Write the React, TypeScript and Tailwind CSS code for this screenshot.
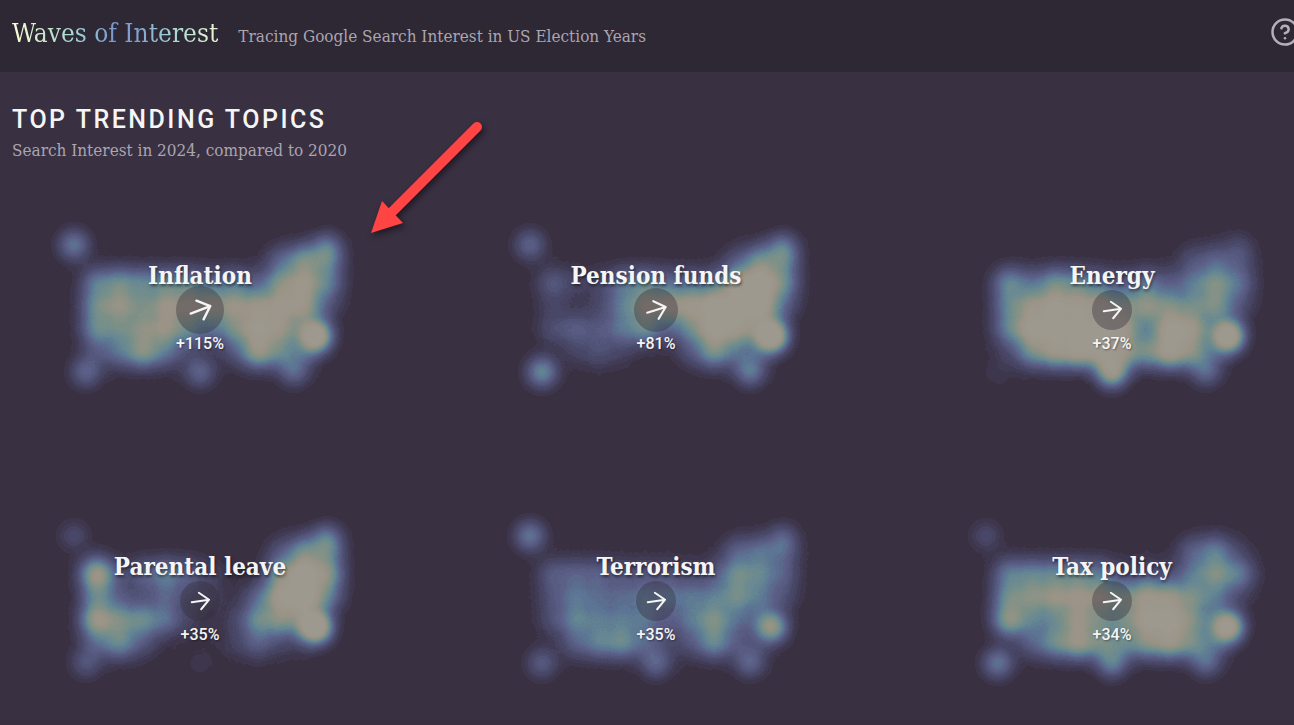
import React from 'react';
import { HelpCircle } from 'lucide-react';

interface Topic {
  name: string;
  change: number;
  angle: number;
  arrowSize: number;
  // interest over the mainland, in tenths, one row per latitude band
  mainland: number[][];
  // Alaska, Hawaii, Texas, Florida, Maine, DC
  outliers: number[];
}

const TOPICS: Topic[] = [
  {
    name: 'Inflation',
    change: 115,
    angle: -21,
    arrowSize: 48,
    mainland: [
      [0, 0, 0, 0, 0, 0, 0, 0, 3, 7, 5],
      [5, 6, 5, 5, 5, 3, 4, 2, 7, 9, 5],
      [6, 8, 5, 8, 8, 8, 8, 8, 9, 9, 2],
      [6, 5, 7, 8, 5, 3, 6, 10, 8, 3, 0],
      [2, 4, 8, 4, 1, 0, 2, 9, 5, 3, 0],
    ],
    outliers: [4, 3, 3, 3, 3, 11],
  },
  {
    name: 'Pension funds',
    change: 81,
    angle: -17,
    arrowSize: 44,
    mainland: [
      [0, 0, 0, 0, 0, 0, 0, 0, 2, 6, 5],
      [3, 1, 1, 4, 5, 3, 3, 3, 9, 13, 6],
      [1, 0, 1, 4, 8, 9, 9, 11, 12, 12, 3],
      [2, 3, 2, 4, 6, 2, 5, 11, 9, 5, 0],
      [0, 1, 2, 1, 0, 0, 2, 7, 3, 2, 0],
    ],
    outliers: [3, 5, 0, 4, 3, 12],
  },
  {
    name: 'Energy',
    change: 37,
    angle: -8,
    arrowSize: 40,
    mainland: [
      [0, 0, 0, 0, 0, 0, 0, 0, 2, 3, 2],
      [6, 3, 6, 5, 3, 2, 4, 2, 4, 7, 4],
      [5, 8, 10, 9, 9, 6, 8, 6, 5, 7, 2],
      [5, 11, 10, 10, 10, 9, 2, 11, 9, 1, 0],
      [1, 6, 9, 10, 10, 8, 6, 11, 7, 2, 0],
    ],
    outliers: [0, 0.5, 8, 3, 1, 12],
  },
  {
    name: 'Parental leave',
    change: 35,
    angle: -8,
    arrowSize: 40,
    mainland: [
      [0, 0, 0, 0, 0, 0, 0, 0, 2, 6, 5],
      [11, 1, 3, 5, 3, 1, 0, 0, 7, 12, 8],
      [5, 2, 1, 3, 1, 1, 0, 3, 10, 13, 5],
      [10, 6, 6, 4, 1, 0, 1, 6, 7, 5, 0],
      [3, 6, 2, 0, 0, 0, 1, 3, 1, 1, 0],
    ],
    outliers: [1.5, 2, 0.5, 0, 3, 12],
  },
  {
    name: 'Terrorism',
    change: 35,
    angle: -8,
    arrowSize: 40,
    mainland: [
      [0, 0, 0, 0, 0, 0, 0, 0, 3, 4, 3],
      [3, 3, 3, 2, 2, 2, 1, 2, 6, 5, 3],
      [2, 4, 3, 3, 4, 4, 4, 4, 6, 4, 2],
      [2, 5, 4, 4, 4, 2, 4, 7, 3, 2, 0],
      [0, 3, 5, 6, 3, 1, 2, 6, 2, 1, 0],
    ],
    outliers: [4, 2.5, 3, 3, 2, 7],
  },
  {
    name: 'Tax policy',
    change: 34,
    angle: -8,
    arrowSize: 40,
    mainland: [
      [0, 0, 0, 0, 0, 0, 0, 0, 3, 5, 1],
      [5, 5, 5, 5, 4, 1, 2, 1, 4, 7, 5],
      [6, 7, 8, 8, 8, 6, 9, 8, 6, 4, 1],
      [9, 4, 4, 8, 5, 5, 10, 11, 6, 2, 0],
      [0, 3, 6, 9, 6, 5, 7, 9, 6, 3, 0],
    ],
    outliers: [1.5, 4, 4, 3, 0, 10],
  },
];

const OUTLIER_SPOTS = [
  [44, 35],
  [56, 162],
  [170, 162],
  [264, 161],
  [297, 37],
  [286, 126],
];

// Density colours, from no interest to the strongest
const SCALE = [
  [57, 48, 66],
  [70, 66, 96],
  [80, 82, 118],
  [92, 96, 137],
  [92, 117, 148],
  [100, 135, 147],
  [118, 143, 138],
  [138, 146, 134],
  [155, 147, 134],
  [156, 150, 140],
  [157, 153, 143],
];

const BANDS = 60;

// The upper half of the range is clipped to the last colour
const bandTable = (channel: number) =>
  Array.from({ length: BANDS }, (_, i) => {
    const pos = Math.min((i / (BANDS / 2)) * 10, 10);
    const low = Math.floor(pos);
    const high = Math.min(low + 1, 10);
    const value = SCALE[low][channel] + (SCALE[high][channel] - SCALE[low][channel]) * (pos - low);
    return ((value + 0.2) / 255).toFixed(5);
  }).join(' ');

const GAUSS_STOPS = Array.from({ length: 13 }, (_, i) => {
  const t = i / 12;
  return { offset: t, opacity: i === 12 ? 0 : Math.exp(-4.5 * t * t) };
});

const SharedDefs = () => (
  <svg className="absolute h-0 w-0" aria-hidden="true">
    <defs>
      <radialGradient id="kernel">
        {GAUSS_STOPS.map((s) => (
          <stop key={s.offset} offset={s.offset} stopColor="#fff" stopOpacity={s.opacity} />
        ))}
      </radialGradient>
      <filter id="density" x="0" y="0" width="1" height="1" colorInterpolationFilters="sRGB">
        <feComponentTransfer>
          <feFuncR type="discrete" tableValues={bandTable(0)} />
          <feFuncG type="discrete" tableValues={bandTable(1)} />
          <feFuncB type="discrete" tableValues={bandTable(2)} />
        </feComponentTransfer>
      </filter>
    </defs>
  </svg>
);

const HeatMap = ({ topic }: { topic: Topic }) => {
  // mainland points overlap, so they are wider and weaker than the outliers
  const points = [
    ...topic.mainland.flatMap((row, r) =>
      row.map((w, c) => ({ x: 67 + c * 23, y: 50 + r * 23, w: w * 0.7, radius: 34 }))
    ),
    ...topic.outliers.map((w, i) => ({ x: OUTLIER_SPOTS[i][0], y: OUTLIER_SPOTS[i][1], w, radius: 31 })),
  ].filter((p) => p.w > 0);

  return (
    <svg viewBox="0 0 340 200" className="col-start-1 row-start-1 h-[200px] w-[340px]" aria-hidden="true">
      <g filter="url(#density)">
        <rect width="340" height="200" fill="#000" />
        {points.map((p) => (
          <circle
            key={`${p.x}-${p.y}`}
            cx={p.x}
            cy={p.y}
            r={p.radius}
            fill="url(#kernel)"
            opacity={Math.min(p.w / 20, 1)}
            className="mix-blend-plus-lighter"
          />
        ))}
      </g>
    </svg>
  );
};

const TrendArrow = ({ angle, size }: { angle: number; size: number }) => (
  <svg width={size} height={size} viewBox="-24 -24 48 48" className="shrink-0" aria-hidden="true">
    <circle r="24" fill="#36303c" fillOpacity="0.4" />
    <path
      d="M-10 0H11M0-10L11 0L0 10"
      transform={`rotate(${angle})`}
      fill="none"
      stroke="#f5f5f5"
      strokeWidth="2.4"
      strokeLinecap="round"
      strokeLinejoin="round"
    />
  </svg>
);

const TopicCard = ({ topic }: { topic: Topic }) => (
  <button type="button" className="grid cursor-pointer justify-items-center">
    <HeatMap topic={topic} />
    <span className="z-10 col-start-1 row-start-1 flex flex-col items-center pt-[50px] text-[#f5f5f5]">
      <span className="font-['Roboto_Slab','DejaVu_Serif_Condensed','DejaVu_Serif',serif] text-2xl/8 font-semibold whitespace-nowrap [text-shadow:1px_2px_3px_rgba(0,0,0,0.5)]">
        {topic.name}
      </span>
      <span className="flex h-9 items-center">
        <TrendArrow angle={topic.angle} size={topic.arrowSize} />
      </span>
      <span className="font-['Roboto_Slab',Roboto,sans-serif] text-base/8 font-medium [text-shadow:1px_1px_2px_rgba(0,0,0,0.4)]">
        +{topic.change}%
      </span>
    </span>
  </button>
);

const Header = () => (
  <header className="flex h-[72px] items-start justify-between bg-[#2e2734] px-3 font-['Roboto_Slab','DejaVu_Serif_Condensed','DejaVu_Serif',serif]">
    <div className="flex items-baseline gap-5 pt-[15px]">
      <h1 className="bg-[linear-gradient(90deg,#ffffd9,#cdeccb_14%,#a5d8d5_30%,#7b9bd0_48%,#7d9fd0_60%,#a5d8d5_78%,#ecf9d0)] bg-clip-text text-[26px]/9 text-transparent">
        Waves of Interest
      </h1>
      <p className="text-[17px] text-[#aaa5af]">Tracing Google Search Interest in US Election Years</p>
    </div>
    <button type="button" aria-label="About" className="pt-[17px] text-[#b4b0b8]">
      <HelpCircle size={30} />
    </button>
  </header>
);

const Pointer = () => (
  <svg
    viewBox="0 0 120 120"
    className="pointer-events-none absolute top-[118px] left-[367px] z-20 h-[120px] w-[120px] drop-shadow-[2px_3px_3px_rgba(0,0,0,0.5)]"
    aria-hidden="true"
  >
    <path d="M110 9L24 95" stroke="#ff4444" strokeWidth="10" strokeLinecap="round" />
    <path d="M4 115L15 83L36 105Z" fill="#ff4444" />
  </svg>
);

export default function App() {
  return (
    <div className="relative min-h-screen overflow-x-hidden bg-[#393042]">
      <SharedDefs />
      <div className="min-w-[1312px]">
        <Header />
        <main className="px-3 pt-8 pb-6">
          <h2 className="font-[Roboto,sans-serif] text-[25px]/8 font-medium tracking-widest text-[#f5f5f5]">
            TOP TRENDING TOPICS
          </h2>
          <p className="font-['Roboto_Slab','DejaVu_Serif_Condensed','DejaVu_Serif',serif] text-[17px]/7 text-[#aaa5af]">
            Search Interest in 2024, compared to 2020
          </p>
          <div className="mt-[46px] grid grid-cols-3 gap-x-20 gap-y-[91px]">
            {TOPICS.map((topic) => (
              <TopicCard key={topic.name} topic={topic} />
            ))}
          </div>
        </main>
      </div>
      <Pointer />
    </div>
  );
}
